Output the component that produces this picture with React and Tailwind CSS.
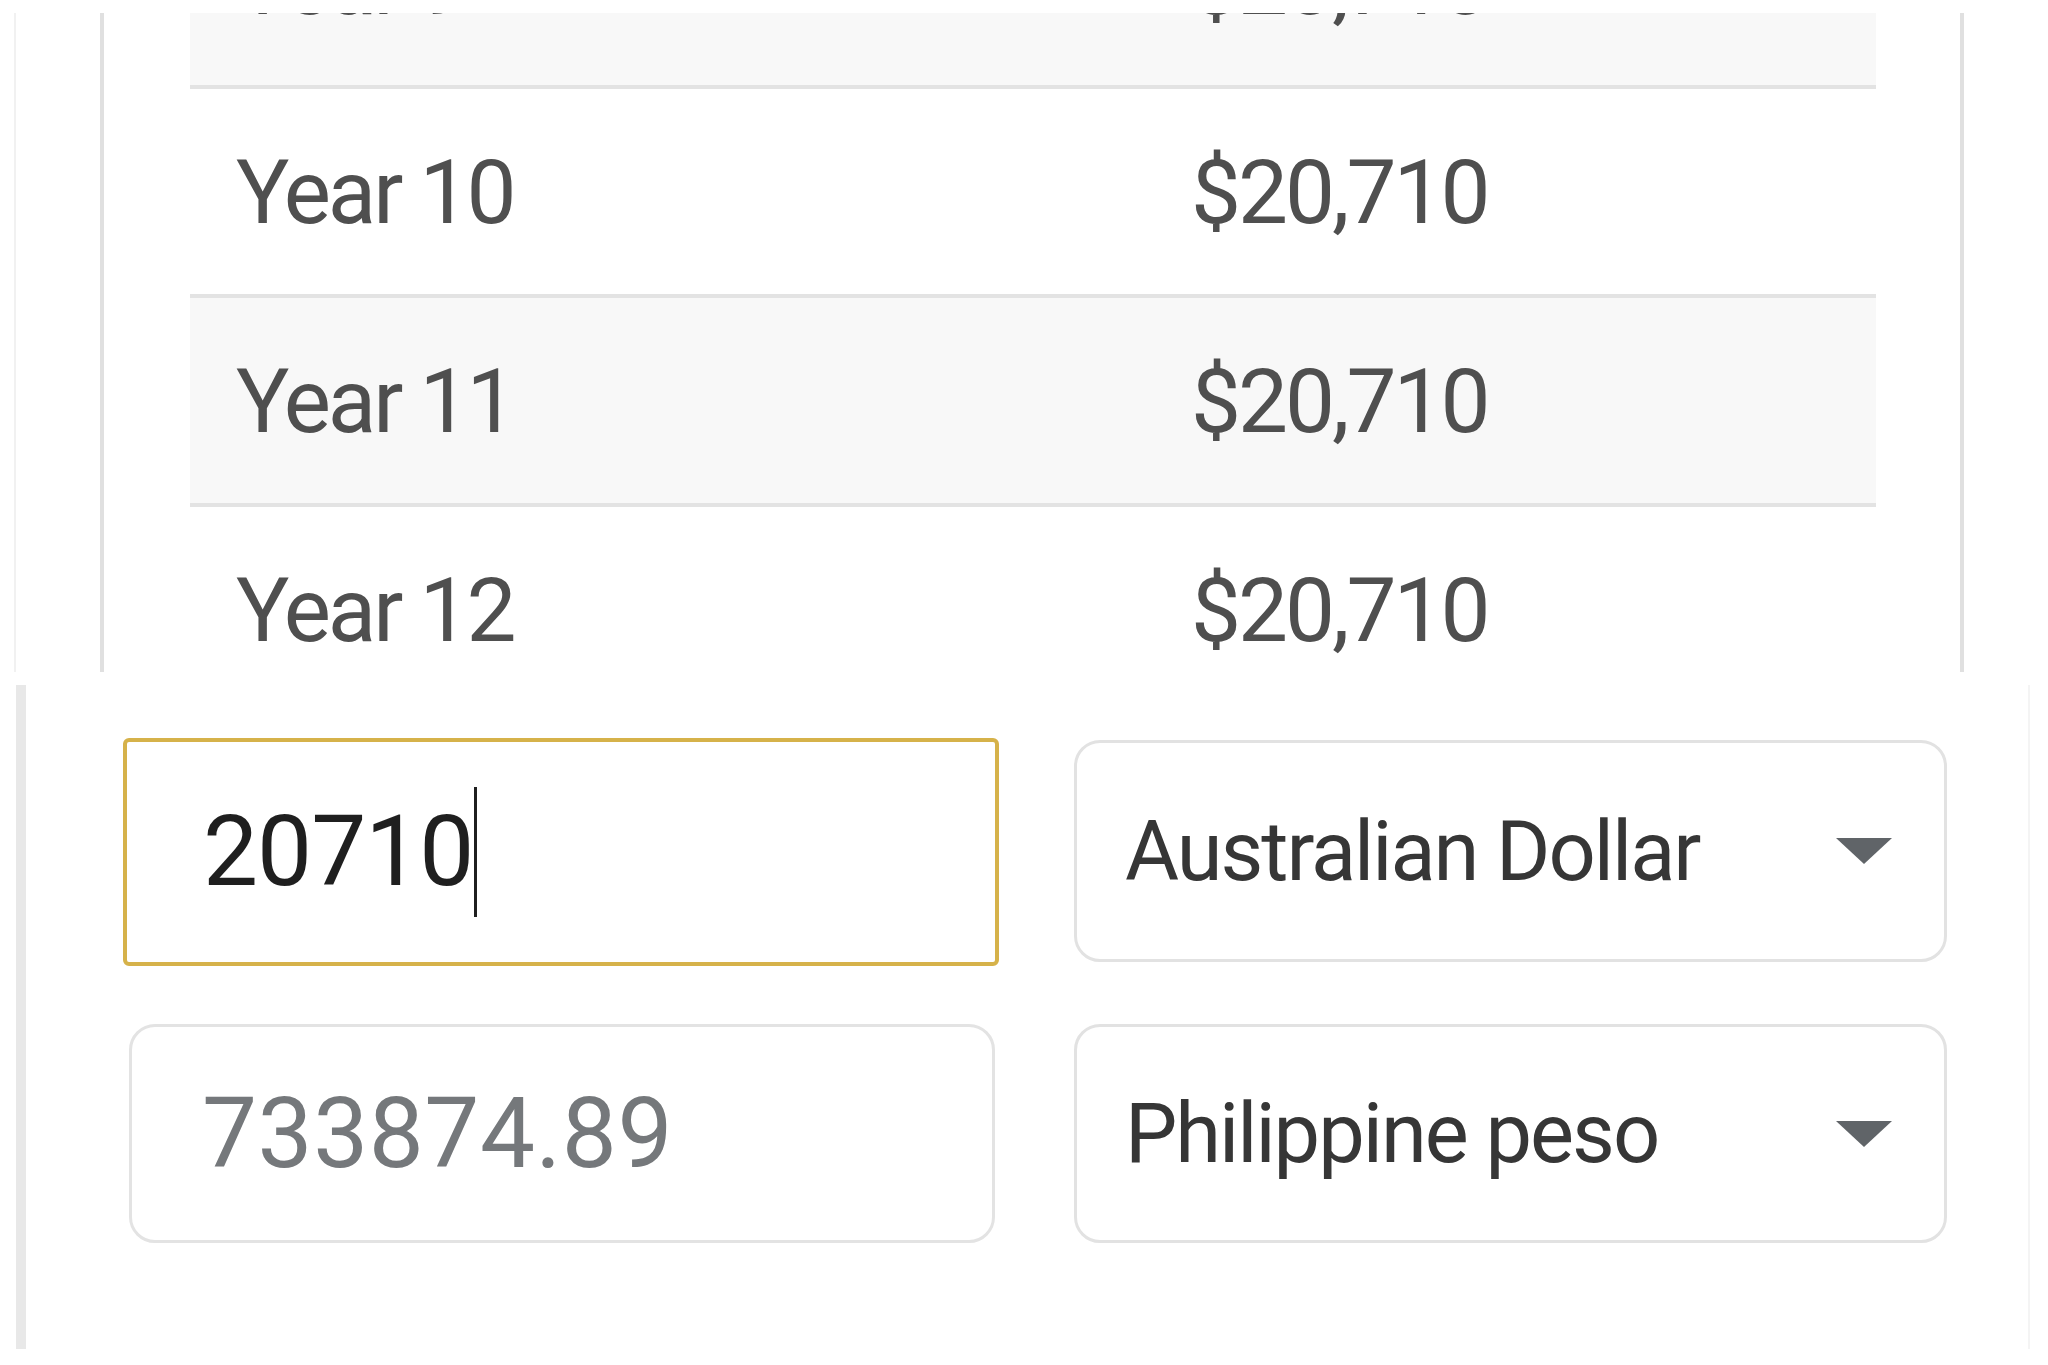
import React from "react";

const rows = [
  { year: "Year 9", bg: "bg-[#f8f8f8]" },
  { year: "Year 10", bg: "bg-white" },
  { year: "Year 11", bg: "bg-[#f8f8f8]" },
  { year: "Year 12", bg: "bg-white" },
];

function Arrow() {
  return (
    <svg width="56" height="26" viewBox="0 0 56 26" className="shrink-0">
      <polygon points="0,0 56,0 28,26" fill="#606468" />
    </svg>
  );
}

export default function App() {
  return (
    <div className="w-[2048px] h-[1365px] bg-white overflow-hidden font-['Roboto','Liberation_Sans',sans-serif]">
      {/* upper screenshot: table card */}
      <div className="pt-[13px] h-[672px] flex">
        <div className="ml-[14px] w-[2px] bg-[#f1f1f1]" />
        <div className="ml-[84px] w-[1864px] h-[659px] border-x-4 border-[#e0e0e0] overflow-hidden">
          <div className="mt-[-133px] ml-[86px] w-[1686px]">
            {rows.map((r) => (
              <div
                key={r.year}
                className={`grid grid-cols-[1001px_1fr] items-center h-[209px] border-b-4 border-[#e3e3e3] ${r.bg}`}
              >
                <div className="pl-[46px] pt-[1px] text-[89px] leading-none tracking-[-3px] text-[#4f4f4f]">
                  {r.year}
                </div>
                <div className="pt-[1px] text-[89px] leading-none tracking-[-3px] text-[#4f4f4f]">$20,710</div>
              </div>
            ))}
          </div>
        </div>
      </div>

      {/* lower screenshot: converter */}
      <div className="mt-[13px] h-[664px] flex">
        <div className="ml-[16px] w-[10px] bg-[#e8e8e8]" />
        <div className="flex-1 pl-[97px] pt-[53px] border-r-2 border-[#f4f4f4] mr-[18px]">
          <div className="grid grid-cols-[876px_873px] gap-x-[75px] gap-y-[58px]">
            <div className="h-[228px] border-4 border-[#d6b24a] rounded-[6px] flex items-center pl-[76px]">
              <span className="text-[98px] leading-none tracking-[-1px] text-[#1f1f1f]">20710</span>
              <span className="ml-[1px] w-[3px] h-[130px] bg-[#1f1f1f]" />
            </div>
            <div className="h-[222px] mt-[2px] border-[3px] border-[#e2e2e2] rounded-[26px] flex items-center justify-between pl-[48px] pr-[52px]">
              <span className="text-[83px] leading-none tracking-[-2px] text-[#363636]">Australian Dollar</span>
              <Arrow />
            </div>
            <div className="h-[219px] ml-[6px] mr-[4px] border-[3px] border-[#e3e3e3] rounded-[26px] flex items-center pl-[70px]">
              <span className="text-[98px] leading-none tracking-[0.5px] text-[#75787b]">733874.89</span>
            </div>
            <div className="h-[219px] border-[3px] border-[#e2e2e2] rounded-[26px] flex items-center justify-between pl-[48px] pr-[52px]">
              <span className="text-[83px] leading-none tracking-[-2px] text-[#363636]">Philippine peso</span>
              <Arrow />
            </div>
          </div>
        </div>
      </div>
    </div>
  );
}
